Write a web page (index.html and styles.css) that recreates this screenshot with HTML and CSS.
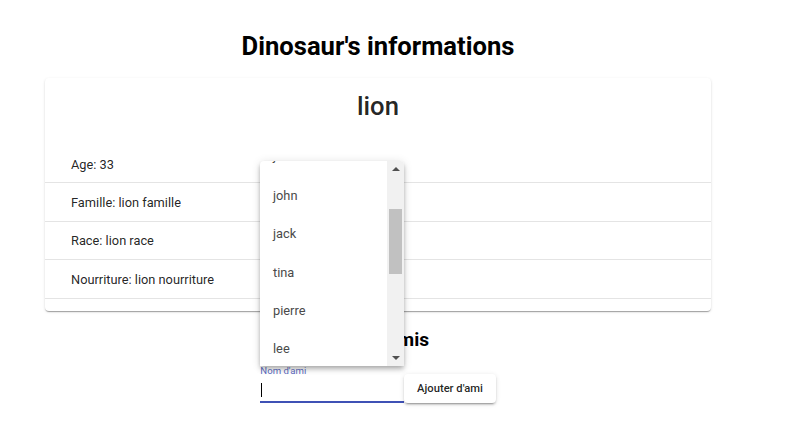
FILE: index.html
```html
<!DOCTYPE html>
<html lang="fr">
<head>
<meta charset="utf-8">
<title>Dinosaur's informations</title>
<link rel="stylesheet" href="styles.css">
</head>
<body>
<main class="page">
  <h1 class="title">Dinosaur's informations</h1>
  <section class="card">
    <h2 class="card-title">lion</h2>
    <ul class="info-list">
      <li class="info-row">Age: 33</li>
      <li class="info-row">Famille: lion famille</li>
      <li class="info-row">Race: lion race</li>
      <li class="info-row">Nourriture: lion nourriture</li>
    </ul>
  </section>
  <h2 class="friends-title">Liste d'amis</h2>
  <form class="friend-form">
    <label class="field">
      <span class="field-label">Nom d'ami</span>
      <span class="field-input"><span class="caret"></span></span>
    </label>
    <button type="button" class="btn">Ajouter d'ami</button>
  </form>
</main>

<div class="autocomplete">
  <div class="options">
    <ul class="option-list">
      <li class="option option-partial">jo</li>
      <li class="option">john</li>
      <li class="option">jack</li>
      <li class="option">tina</li>
      <li class="option">pierre</li>
      <li class="option">lee</li>
      <li class="option">paul</li>
    </ul>
  </div>
  <div class="scrollbar">
    <span class="arrow arrow-up"></span>
    <span class="track"><span class="thumb"></span></span>
    <span class="arrow arrow-down"></span>
  </div>
</div>
</body>
</html>
```

FILE: styles.css
```css
* { box-sizing: border-box; }
html, body { margin: 0; padding: 0; background: #fff; }
body {
  font-family: Roboto, "Helvetica Neue", Arial, sans-serif;
  color: rgba(0,0,0,.87);
  position: relative;
  height: 445px;
  overflow: hidden;
}
.page {
  width: 666px;
  margin-left: 45px;
  display: flex;
  flex-direction: column;
}
.title {
  margin: 31px 0 17px;
  font-size: 25.6px;
  line-height: 30px;
  font-weight: 700;
  text-align: center;
  color: #000;
}
.card {
  background: #fff;
  border-radius: 4px;
  box-shadow: 0 2px 1px -1px rgba(0,0,0,.2), 0 1px 1px 0 rgba(0,0,0,.14), 0 1px 3px 0 rgba(0,0,0,.12);
  padding: 12px 0 12px;
}
.card-title {
  margin: 0 0 23px;
  text-align: center;
  font-size: 25.6px;
  line-height: 32px;
  font-weight: 500;
  color: rgba(0,0,0,.87);
}
.info-list { list-style: none; margin: 0; padding: 0; }
.info-row {
  height: 38.4px;
  display: flex;
  align-items: center;
  padding-left: 26px;
  padding-top: 1px;
  font-size: 12.8px;
  border-bottom: 1px solid #e4e4e4;
}
.friends-title {
  margin: 17px 0 13.5px;
  text-align: center;
  font-size: 19.2px;
  line-height: 24px;
  font-weight: 700;
  color: #000;
}
.friend-form {
  display: flex;
  justify-content: center;
  align-items: flex-end;
}
.field {
  width: 144px;
  display: flex;
  flex-direction: column;
}
.field-label {
  font-size: 9.6px;
  line-height: 11px;
  color: #5c6bc0;
}
.field-input {
  height: 27px;
  border-bottom: 2px solid #3f51b5;
  display: flex;
  align-items: center;
  padding-top: 2px;
}
.caret {
  width: 1px;
  height: 14px;
  background: #000;
  margin-left: 1px;
}
.btn {
  height: 28.8px;
  padding: 0 12.8px;
  border: 0;
  border-radius: 4px;
  background: #fff;
  font-family: Roboto, Arial, sans-serif;
  font-size: 11.2px;
  font-weight: 500;
  color: rgba(0,0,0,.87);
  box-shadow: 0 3px 1px -2px rgba(0,0,0,.2), 0 2px 2px 0 rgba(0,0,0,.14), 0 1px 5px 0 rgba(0,0,0,.12);
}

/* autocomplete overlay */
.autocomplete {
  position: absolute;
  left: 260px;
  top: 161px;
  width: 144px;
  height: 205px;
  background: #fff;
  border-radius: 4px 4px 0 0;
  box-shadow: 0 2px 4px -1px rgba(0,0,0,.2), 0 4px 5px 0 rgba(0,0,0,.14), 0 1px 10px 0 rgba(0,0,0,.12);
  display: flex;
  overflow: hidden;
}
.options { flex: 1; overflow: hidden; }
.option-list { list-style: none; margin: -25.5px 0 0; padding: 0; }
.option {
  height: 38.3px;
  display: flex;
  align-items: center;
  padding-left: 13px;
  font-size: 12.8px;
  color: #4a4a4a;
}
.option-partial { height: 40.8px; }
.scrollbar {
  width: 17px;
  background: #f1f1f1;
  display: flex;
  flex-direction: column;
  align-items: center;
}
.arrow {
  width: 0; height: 0;
  border-left: 4px solid transparent;
  border-right: 4px solid transparent;
}
.arrow-up { border-bottom: 4px solid #505050; margin: 6px 0 7px; }
.arrow-down { border-top: 4px solid #505050; margin: 7px 0 6px; }
.track { flex: 1; width: 100%; padding: 0 2px; }
.thumb {
  display: block;
  margin-top: 31px;
  height: 65px;
  background: #c1c1c1;
}
```
